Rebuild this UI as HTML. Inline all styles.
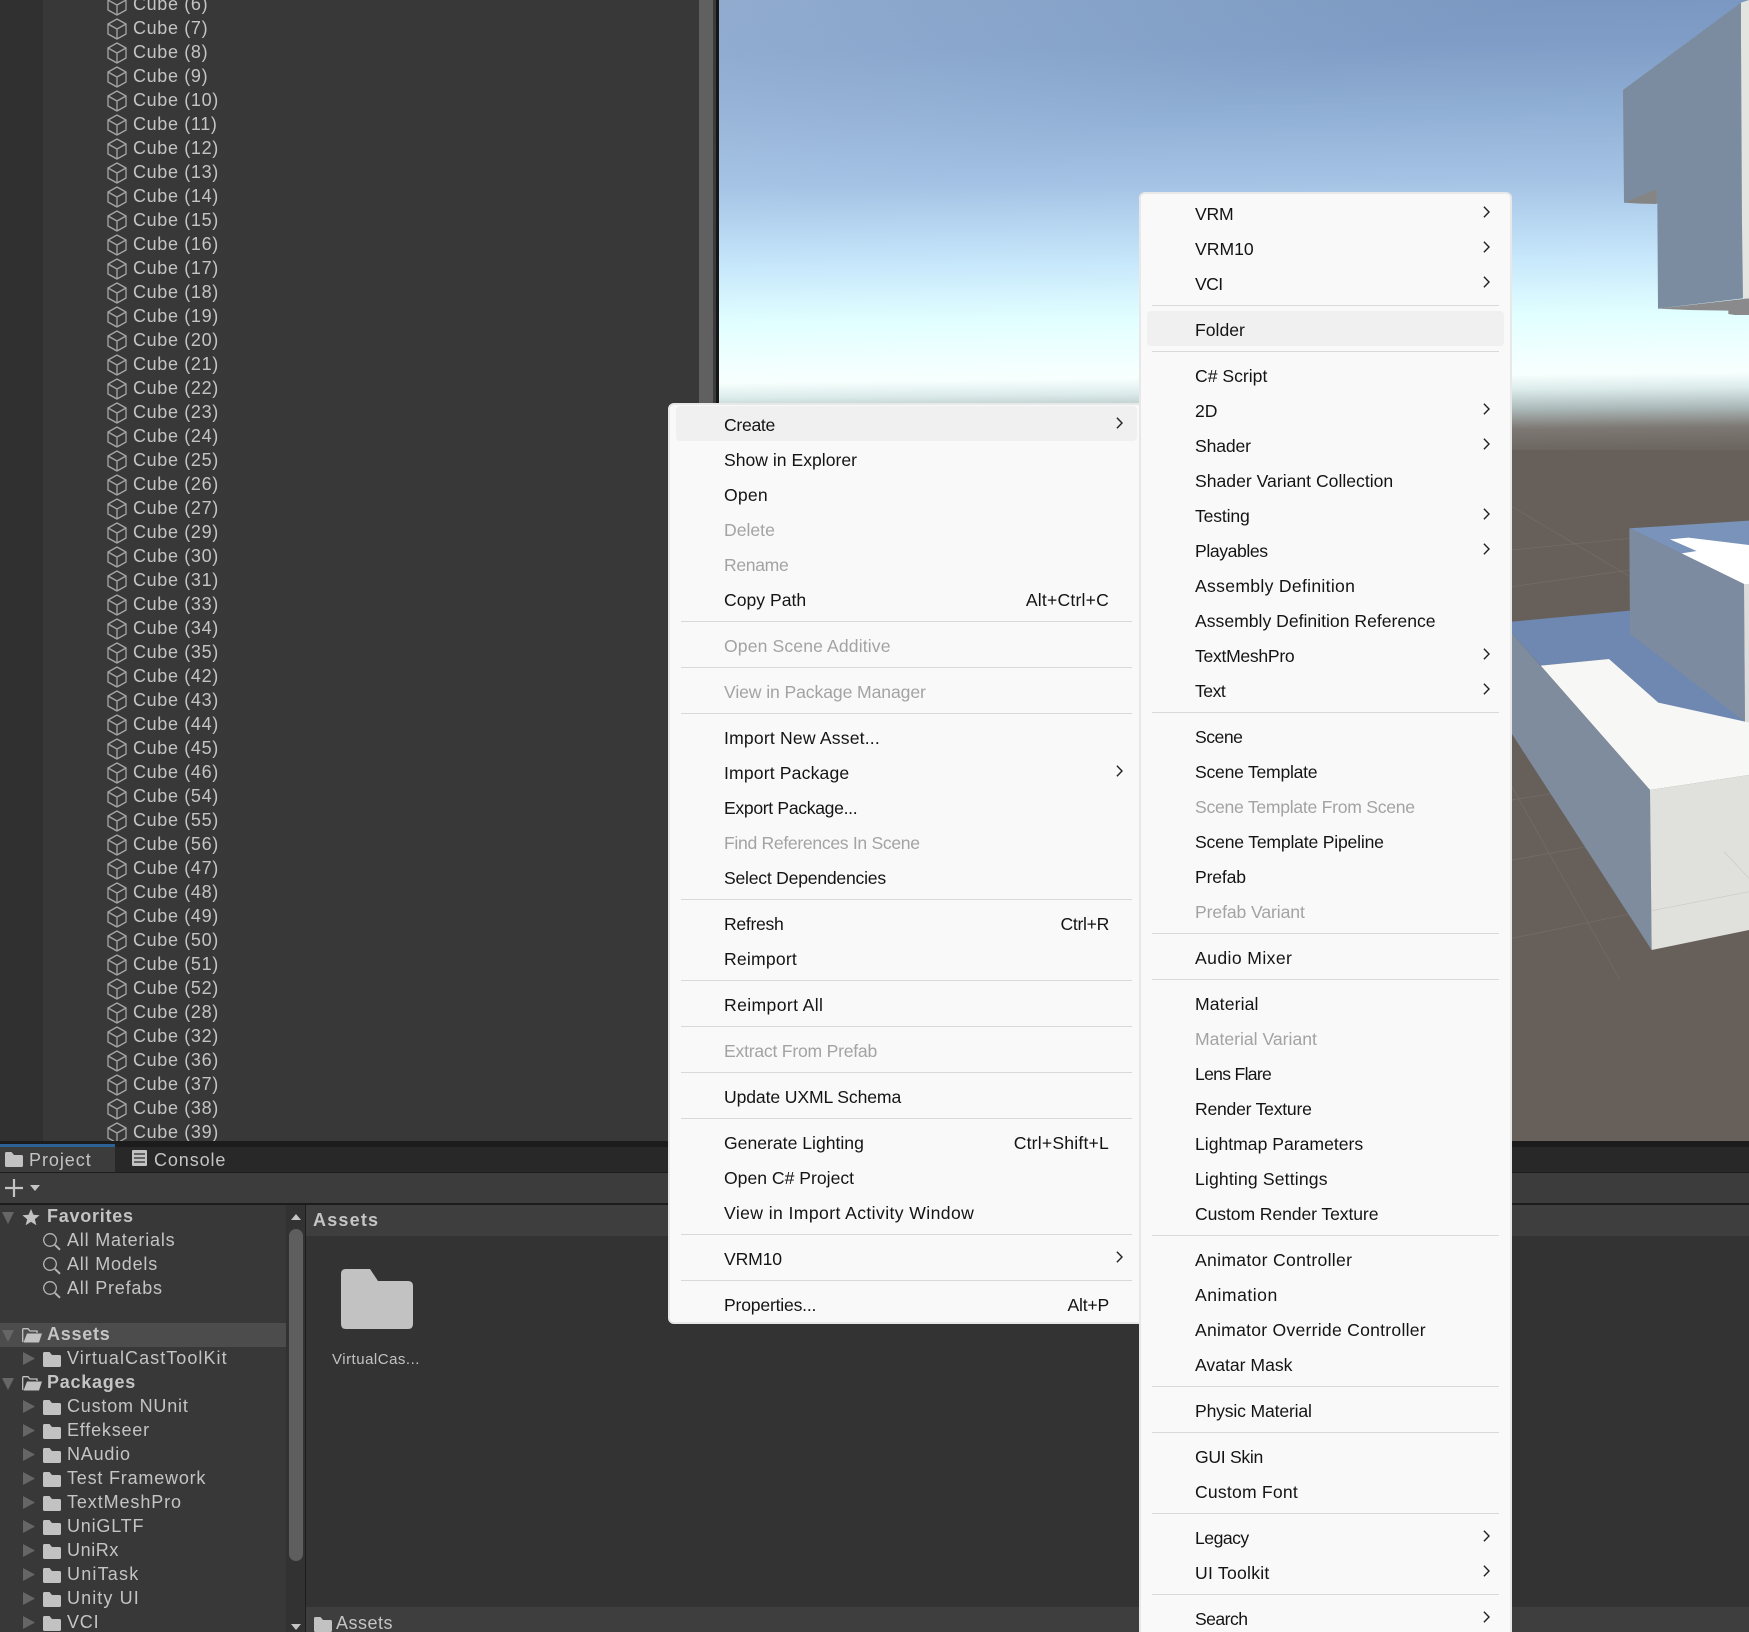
<!DOCTYPE html>
<html><head><meta charset="utf-8"><title>Unity Editor</title>
<style>
html,body{margin:0;padding:0;background:#333;overflow:hidden;width:1749px;height:1632px;}
#w{position:absolute;left:0;top:0;width:1749px;height:1632px;overflow:hidden;font-family:"Liberation Sans",sans-serif;}
.a{position:absolute;}
#h{position:absolute;left:0;top:0;width:699px;height:1141px;background:#383838;overflow:hidden;}
#g{position:absolute;left:0;top:0;width:43px;height:1141px;background:#303030;}
#l{position:absolute;left:133px;top:-8px;color:#c4c4c4;font-size:18px;letter-spacing:.65px;}
.r{height:24px;line-height:24px;white-space:pre;position:relative;}
.r svg{position:absolute;left:-26.5px;top:2px;width:20px;height:22px;}
.t{height:24px;line-height:24px;position:relative;white-space:pre;color:#c4c4c4;font-size:18px;letter-spacing:.8px;padding-left:67px;}
.t.b{font-weight:bold;padding-left:47px;letter-spacing:.75px;}
.t svg{position:absolute;}
.t svg.f{left:43px;top:6px;width:18px;height:15px;}
.t svg.ar{left:23px;top:6px;width:12px;height:13px;}
.t svg.dn{left:2px;top:8px;width:12px;height:12px;}
.t svg.sr{left:43px;top:5px;width:18px;height:18px;}
.m{position:absolute;box-sizing:border-box;background:#f9f9f9;border:2px solid #e8e8e8;border-radius:6px;padding:1px 6px;color:#141414;font-size:17.6px;}
.i{height:35px;line-height:38px;padding-left:48px;position:relative;white-space:pre;border-radius:4px;}
.i.h{background:#f0f0f0;}
.i.d{color:#a3a3a3;}
.i b{position:absolute;right:28px;top:0;font-weight:normal;}
.i svg{position:absolute;right:14px;top:11px;width:7px;height:12px;}
.s{height:11px;margin:0 5px;position:relative;}
.s:after{content:"";position:absolute;left:0;right:0;top:5px;height:1.4px;background:#d9d9d9;}
</style></head>
<body>
<div id="w">
<svg width="0" height="0" style="position:absolute">
<symbol id="c" viewBox="0 0 20 22"><path d="M10 1 19 6V16L10 21 1 16V6ZM1 6 10 11 19 6M10 11V21" fill="none" stroke="#a6a6a6" stroke-width="1.3" stroke-linejoin="round"/></symbol>
<symbol id="f" viewBox="0 0 18 15"><path d="M0 1.5Q0 0 1.5 0H6.5L9 3H16.5Q18 3 18 4.5V13.5Q18 15 16.5 15H1.5Q0 15 0 13.5Z" fill="#c2c2c2"/></symbol>
<symbol id="o" viewBox="0 0 20 15"><path d="M.7 14V1.5Q.7.7 1.5.7H6L8 3H15V5" fill="none" stroke="#c2c2c2" stroke-width="1.3"/><path d="M1.5 14.5 5 5.5H20L17 14.5Z" fill="#c2c2c2"/></symbol>
<symbol id="a" viewBox="0 0 12 13" preserveAspectRatio="none"><path d="M0 0 12 6.5 0 13Z" fill="#666"/></symbol>
<symbol id="d" viewBox="0 0 12 12"><path d="M0 0H12L6 12Z" fill="#666"/></symbol>
<symbol id="s" viewBox="0 0 18 18"><circle cx="7" cy="7" r="6.3" fill="none" stroke="#b5b5b5" stroke-width="1.3"/><path d="M12 12 17 16.8" stroke="#b5b5b5" stroke-width="2"/></symbol>
<symbol id="v" viewBox="0 0 7 12"><path d="M.9.8 6 6 .9 11.2" fill="none" stroke="#222" stroke-width="1.4"/></symbol>
</svg>

<!-- Scene view -->
<div class="a" style="left:719px;top:0;width:1030px;height:1141px;overflow:hidden;background:#67605a;">
<div class="a" style="left:-100px;top:-30px;width:1230px;height:480px;background:linear-gradient(179.4deg,#7593bc 0%,#7f9dc6 17%,#a3c2e4 44%,#c6e6fb 60%,#e1ffff 72%,#f3ffff 81%,#f6fffe 84%,#dceceb 87%,#abb9b9 91%,#7d7873 95%,#6a645e 100%);"></div>
<div class="a" style="left:0;top:0;width:1030px;height:300px;background:linear-gradient(to bottom right,rgba(205,225,245,.28) 0,rgba(205,225,245,0) 40%);"></div>
<svg class="a" style="left:-719px;top:0" width="1749" height="1141" viewBox="0 0 1749 1141">
<g transform="translate(1400,0) scale(.33333)">
<path d="M669 270 1023 8 1047 0V900L1029 895 774 926 772 610 672 608Z" fill="#7c8ca0"/>
<path d="M1023 8 1047 0V896H1029L1026 670 1023 105Z" fill="#e3e3df"/>
<path d="M672 608 770 567V612L720 611Z" fill="#858585"/>
<path d="M774 926 1029 897 1047 896V945L1005 945 985 942 985 932 868 930Z" fill="#8a8a8c"/>
</g>
<g transform="translate(1400,480) scale(.33333)">
<g stroke="#7a746e" stroke-width="2" fill="none" opacity=".7">
<path d="M336 80 690 290M336 210 690 175M336 320 690 270M336 960 460 940M336 1140 560 1100M336 1375 700 1300M336 920 660 1500"/>
</g>
<path d="M336 425 690 392 1047 700V740L775 668 627 537 422 557 336 460Z" fill="#6e88b2"/>
<path d="M688 145 1047 122V320L1032 312Z" fill="#7a93ba"/>
<path d="M810 178 865 173 1047 195V312H1032L845 220 890 213Z" fill="#fff"/>
<path d="M688 145 1032 312 1035 725 690 462Z" fill="#7c8b9f"/>
<path d="M1032 312H1047V728H1035Z" fill="#dcdcdc"/>
<path d="M422 557 627 537 775 668 1035 725 1047 728V885L750 930Z" fill="#f7f8f6"/>
<path d="M336 460 750 930 755 1410 336 762Z" fill="#7f8c9e"/>
<path d="M750 930 1047 885V1350L755 1410Z" fill="#e0e1dd"/>
<path d="M755 1292 1047 1235M972 1115 1047 1195" stroke="#c9c9c5" stroke-width="2" fill="none"/>
</g>
</svg>
</div>

<!-- Hierarchy -->
<div id="h"><div id="g"></div>
<div id="l">
<div class="r"><svg><use href="#c"/></svg>Cube (6)</div>
<div class="r"><svg><use href="#c"/></svg>Cube (7)</div>
<div class="r"><svg><use href="#c"/></svg>Cube (8)</div>
<div class="r"><svg><use href="#c"/></svg>Cube (9)</div>
<div class="r"><svg><use href="#c"/></svg>Cube (10)</div>
<div class="r"><svg><use href="#c"/></svg>Cube (11)</div>
<div class="r"><svg><use href="#c"/></svg>Cube (12)</div>
<div class="r"><svg><use href="#c"/></svg>Cube (13)</div>
<div class="r"><svg><use href="#c"/></svg>Cube (14)</div>
<div class="r"><svg><use href="#c"/></svg>Cube (15)</div>
<div class="r"><svg><use href="#c"/></svg>Cube (16)</div>
<div class="r"><svg><use href="#c"/></svg>Cube (17)</div>
<div class="r"><svg><use href="#c"/></svg>Cube (18)</div>
<div class="r"><svg><use href="#c"/></svg>Cube (19)</div>
<div class="r"><svg><use href="#c"/></svg>Cube (20)</div>
<div class="r"><svg><use href="#c"/></svg>Cube (21)</div>
<div class="r"><svg><use href="#c"/></svg>Cube (22)</div>
<div class="r"><svg><use href="#c"/></svg>Cube (23)</div>
<div class="r"><svg><use href="#c"/></svg>Cube (24)</div>
<div class="r"><svg><use href="#c"/></svg>Cube (25)</div>
<div class="r"><svg><use href="#c"/></svg>Cube (26)</div>
<div class="r"><svg><use href="#c"/></svg>Cube (27)</div>
<div class="r"><svg><use href="#c"/></svg>Cube (29)</div>
<div class="r"><svg><use href="#c"/></svg>Cube (30)</div>
<div class="r"><svg><use href="#c"/></svg>Cube (31)</div>
<div class="r"><svg><use href="#c"/></svg>Cube (33)</div>
<div class="r"><svg><use href="#c"/></svg>Cube (34)</div>
<div class="r"><svg><use href="#c"/></svg>Cube (35)</div>
<div class="r"><svg><use href="#c"/></svg>Cube (42)</div>
<div class="r"><svg><use href="#c"/></svg>Cube (43)</div>
<div class="r"><svg><use href="#c"/></svg>Cube (44)</div>
<div class="r"><svg><use href="#c"/></svg>Cube (45)</div>
<div class="r"><svg><use href="#c"/></svg>Cube (46)</div>
<div class="r"><svg><use href="#c"/></svg>Cube (54)</div>
<div class="r"><svg><use href="#c"/></svg>Cube (55)</div>
<div class="r"><svg><use href="#c"/></svg>Cube (56)</div>
<div class="r"><svg><use href="#c"/></svg>Cube (47)</div>
<div class="r"><svg><use href="#c"/></svg>Cube (48)</div>
<div class="r"><svg><use href="#c"/></svg>Cube (49)</div>
<div class="r"><svg><use href="#c"/></svg>Cube (50)</div>
<div class="r"><svg><use href="#c"/></svg>Cube (51)</div>
<div class="r"><svg><use href="#c"/></svg>Cube (52)</div>
<div class="r"><svg><use href="#c"/></svg>Cube (28)</div>
<div class="r"><svg><use href="#c"/></svg>Cube (32)</div>
<div class="r"><svg><use href="#c"/></svg>Cube (36)</div>
<div class="r"><svg><use href="#c"/></svg>Cube (37)</div>
<div class="r"><svg><use href="#c"/></svg>Cube (38)</div>
<div class="r"><svg><use href="#c"/></svg>Cube (39)</div>
</div></div>
<div class="a" style="left:699px;top:0;width:14px;height:1141px;background:#606060;"></div>
<div class="a" style="left:713px;top:0;width:3px;height:1141px;background:#3b3b3b;"></div>
<div class="a" style="left:716px;top:0;width:3px;height:1141px;background:#161616;"></div>

<!-- Bottom panel -->
<div class="a" style="left:0;top:1141px;width:1749px;height:491px;background:#333;"></div>
<div class="a" style="left:0;top:1141px;width:1749px;height:6px;background:#1c1c1c;"></div>
<div class="a" style="left:0;top:1147px;width:1749px;height:25px;background:#282828;"></div>
<div class="a" style="left:0;top:1147px;width:115px;height:25px;background:#3c3c3c;"></div>
<div class="a" style="left:0;top:1144px;width:115px;height:3px;background:#2d6297;"></div>
<div class="a" style="left:0;top:1172px;width:1749px;height:1px;background:#1c1c1c;"></div>
<svg class="a" style="left:5px;top:1152px" width="18" height="15"><use href="#f"/></svg>
<div class="a" style="left:29px;top:1148px;line-height:24px;color:#c4c4c4;font-size:18px;letter-spacing:.95px;">Project</div>
<svg class="a" style="left:132px;top:1150px" width="15" height="16"><rect width="15" height="16" rx="1" fill="#c2c2c2"/><path d="M2 4H13M2 8H13M2 12H13" stroke="#282828" stroke-width="1.2"/></svg>
<div class="a" style="left:154px;top:1148px;line-height:24px;color:#c4c4c4;font-size:18px;letter-spacing:.9px;">Console</div>

<div class="a" style="left:0;top:1173px;width:1749px;height:30px;background:#3c3c3c;"></div>
<div class="a" style="left:0;top:1203px;width:1749px;height:2px;background:#1c1c1c;"></div>
<svg class="a" style="left:5px;top:1179px" width="36" height="18"><path d="M9 0V18M0 9H18" stroke="#c4c4c4" stroke-width="2.2"/><path d="M25 6H35L30 12Z" fill="#c4c4c4"/></svg>

<!-- Tree -->
<div class="a" style="left:0;top:1205px;width:286px;height:427px;background:#383838;"></div>
<div class="a" style="left:0;top:1323px;width:286px;height:24px;background:#4c4c4c;"></div>
<div class="a" style="left:286px;top:1205px;width:19px;height:427px;background:#323232;"></div>
<div class="a" style="left:305px;top:1205px;width:1px;height:427px;background:#1e1e1e;"></div>
<div class="a" style="left:289px;top:1229px;width:14px;height:332px;background:#5e5e5e;border-radius:7px;"></div>
<svg class="a" style="left:291px;top:1214px" width="10" height="6"><path d="M0 6H10L5 0Z" fill="#c4c4c4"/></svg>
<svg class="a" style="left:291px;top:1624px" width="10" height="6"><path d="M0 0H10L5 6Z" fill="#c4c4c4"/></svg>

<div class="a" style="left:0;top:1204px;width:286px;">
<div class="t b"><svg class="dn"><use href="#d"/></svg><svg class="a" style="left:22px;top:4px" width="18" height="18" viewBox="0 0 18 18"><path d="M9 1 11.4 6.8 17.6 7.2 12.8 11.2 14.4 17.2 9 13.9 3.6 17.2 5.2 11.2.4 7.2 6.6 6.8Z" fill="#c2c2c2"/></svg>Favorites</div>
<div class="t"><svg class="sr"><use href="#s"/></svg>All Materials</div>
<div class="t"><svg class="sr"><use href="#s"/></svg>All Models</div>
<div class="t"><svg class="sr"><use href="#s"/></svg>All Prefabs</div>
</div>
<div class="a" style="left:0;top:1322px;width:286px;height:310px;overflow:hidden;">
<div class="t b"><svg class="dn"><use href="#d"/></svg><svg class="a" style="left:22px;top:6px" width="20" height="15"><use href="#o"/></svg>Assets</div>
<div class="t" style="letter-spacing:1.05px"><svg class="ar"><use href="#a"/></svg><svg class="f"><use href="#f"/></svg>VirtualCastToolKit</div>
<div class="t b"><svg class="dn"><use href="#d"/></svg><svg class="a" style="left:22px;top:6px" width="20" height="15"><use href="#o"/></svg>Packages</div>
<div class="t"><svg class="ar"><use href="#a"/></svg><svg class="f"><use href="#f"/></svg>Custom NUnit</div>
<div class="t"><svg class="ar"><use href="#a"/></svg><svg class="f"><use href="#f"/></svg>Effekseer</div>
<div class="t"><svg class="ar"><use href="#a"/></svg><svg class="f"><use href="#f"/></svg>NAudio</div>
<div class="t"><svg class="ar"><use href="#a"/></svg><svg class="f"><use href="#f"/></svg>Test Framework</div>
<div class="t" style="letter-spacing:.9px"><svg class="ar"><use href="#a"/></svg><svg class="f"><use href="#f"/></svg>TextMeshPro</div>
<div class="t"><svg class="ar"><use href="#a"/></svg><svg class="f"><use href="#f"/></svg>UniGLTF</div>
<div class="t" style="letter-spacing:.6px"><svg class="ar"><use href="#a"/></svg><svg class="f"><use href="#f"/></svg>UniRx</div>
<div class="t" style="letter-spacing:1.2px"><svg class="ar"><use href="#a"/></svg><svg class="f"><use href="#f"/></svg>UniTask</div>
<div class="t" style="letter-spacing:1.1px"><svg class="ar"><use href="#a"/></svg><svg class="f"><use href="#f"/></svg>Unity UI</div>
<div class="t"><svg class="ar"><use href="#a"/></svg><svg class="f"><use href="#f"/></svg>VCI</div>
</div>

<!-- Assets pane -->
<div class="a" style="left:306px;top:1205px;width:1443px;height:31px;background:#3e3e3e;"></div>
<div class="a" style="left:313px;top:1208px;line-height:24px;color:#c4c4c4;font-size:18px;font-weight:bold;letter-spacing:1.2px;">Assets</div>
<svg class="a" style="left:341px;top:1269px" width="72" height="60" viewBox="0 0 72 60"><path d="M0 5Q0 0 5 0H29L37 12H67Q72 12 72 17V55Q72 60 67 60H5Q0 60 0 55Z" fill="#c2c2c2"/></svg>
<div class="a" style="left:332px;top:1350px;line-height:20px;color:#c2c2c2;font-size:15px;letter-spacing:.5px;white-space:pre;">VirtualCas...</div>
<div class="a" style="left:306px;top:1607px;width:1443px;height:25px;background:#3e3e3e;"></div>
<svg class="a" style="left:314px;top:1617px" width="18" height="15"><use href="#f"/></svg>
<div class="a" style="left:336px;top:1611px;line-height:24px;color:#c4c4c4;font-size:18px;letter-spacing:.5px;">Assets</div>

<!-- Context menu 1 -->
<div class="m" style="left:668px;top:403px;width:477px;">
<div class="i h" style="letter-spacing:-.3px">Create<svg><use href="#v"/></svg></div>
<div class="i">Show in Explorer</div>
<div class="i" style="letter-spacing:.2px">Open</div>
<div class="i d">Delete</div>
<div class="i d" style="letter-spacing:-.35px">Rename</div>
<div class="i">Copy Path<b style="letter-spacing:.2px">Alt+Ctrl+C</b></div>
<div class="s"></div>
<div class="i d" style="letter-spacing:.12px">Open Scene Additive</div>
<div class="s"></div>
<div class="i d" style="letter-spacing:-.1px">View in Package Manager</div>
<div class="s"></div>
<div class="i" style="letter-spacing:.18px">Import New Asset...</div>
<div class="i" style="letter-spacing:.15px">Import Package<svg><use href="#v"/></svg></div>
<div class="i" style="letter-spacing:-.33px">Export Package...</div>
<div class="i d" style="letter-spacing:-.32px">Find References In Scene</div>
<div class="i" style="letter-spacing:-.23px">Select Dependencies</div>
<div class="s"></div>
<div class="i" style="letter-spacing:-.3px">Refresh<b>Ctrl+R</b></div>
<div class="i" style="letter-spacing:.2px">Reimport</div>
<div class="s"></div>
<div class="i" style="letter-spacing:.37px">Reimport All</div>
<div class="s"></div>
<div class="i d" style="letter-spacing:-.23px">Extract From Prefab</div>
<div class="s"></div>
<div class="i" style="letter-spacing:-.12px">Update UXML Schema</div>
<div class="s"></div>
<div class="i">Generate Lighting<b style="letter-spacing:.2px">Ctrl+Shift+L</b></div>
<div class="i">Open C# Project</div>
<div class="i" style="letter-spacing:.4px">View in Import Activity Window</div>
<div class="s"></div>
<div class="i" style="letter-spacing:-.15px">VRM10<svg><use href="#v"/></svg></div>
<div class="s"></div>
<div class="i" style="letter-spacing:-.2px">Properties...<b>Alt+P</b></div>
</div>

<!-- Context menu 2 -->
<div class="m" style="left:1139px;top:192px;width:373px;height:1445px;">
<div class="i" style="letter-spacing:-.2px">VRM<svg><use href="#v"/></svg></div>
<div class="i">VRM10<svg><use href="#v"/></svg></div>
<div class="i" style="letter-spacing:-.6px">VCI<svg><use href="#v"/></svg></div>
<div class="s"></div>
<div class="i h">Folder</div>
<div class="s"></div>
<div class="i">C# Script</div>
<div class="i">2D<svg><use href="#v"/></svg></div>
<div class="i" style="letter-spacing:-.15px">Shader<svg><use href="#v"/></svg></div>
<div class="i">Shader Variant Collection</div>
<div class="i" style="letter-spacing:-.15px">Testing<svg><use href="#v"/></svg></div>
<div class="i" style="letter-spacing:-.4px">Playables<svg><use href="#v"/></svg></div>
<div class="i" style="letter-spacing:.3px">Assembly Definition</div>
<div class="i">Assembly Definition Reference</div>
<div class="i" style="letter-spacing:-.3px">TextMeshPro<svg><use href="#v"/></svg></div>
<div class="i" style="letter-spacing:-.5px">Text<svg><use href="#v"/></svg></div>
<div class="s"></div>
<div class="i" style="letter-spacing:-.5px">Scene</div>
<div class="i" style="letter-spacing:-.25px">Scene Template</div>
<div class="i d" style="letter-spacing:-.27px">Scene Template From Scene</div>
<div class="i" style="letter-spacing:-.2px">Scene Template Pipeline</div>
<div class="i" style="letter-spacing:-.15px">Prefab</div>
<div class="i d" style="letter-spacing:-.1px">Prefab Variant</div>
<div class="s"></div>
<div class="i" style="letter-spacing:.4px">Audio Mixer</div>
<div class="s"></div>
<div class="i" style="letter-spacing:.12px">Material</div>
<div class="i d">Material Variant</div>
<div class="i" style="letter-spacing:-.7px">Lens Flare</div>
<div class="i" style="letter-spacing:-.24px">Render Texture</div>
<div class="i">Lightmap Parameters</div>
<div class="i" style="letter-spacing:.15px">Lighting Settings</div>
<div class="i" style="letter-spacing:-.1px">Custom Render Texture</div>
<div class="s"></div>
<div class="i" style="letter-spacing:.3px">Animator Controller</div>
<div class="i" style="letter-spacing:.5px">Animation</div>
<div class="i" style="letter-spacing:.25px">Animator Override Controller</div>
<div class="i">Avatar Mask</div>
<div class="s"></div>
<div class="i" style="letter-spacing:-.17px">Physic Material</div>
<div class="s"></div>
<div class="i" style="letter-spacing:-.3px">GUI Skin</div>
<div class="i" style="letter-spacing:.2px">Custom Font</div>
<div class="s"></div>
<div class="i" style="letter-spacing:-.5px">Legacy<svg><use href="#v"/></svg></div>
<div class="i" style="letter-spacing:.25px">UI Toolkit<svg><use href="#v"/></svg></div>
<div class="s"></div>
<div class="i" style="letter-spacing:-.55px">Search<svg><use href="#v"/></svg></div>
</div>
</div>
</body></html>
